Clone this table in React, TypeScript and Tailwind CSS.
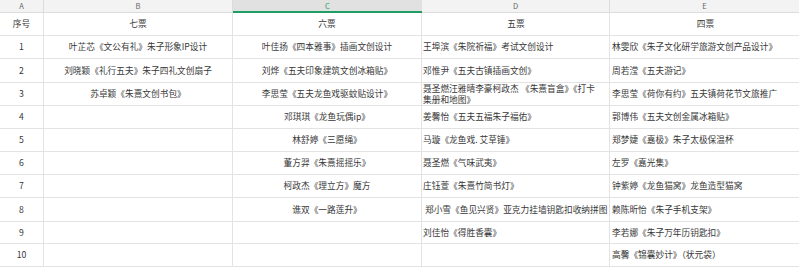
import React from "react";

const rows: [string, string, string, string, string][] = [
  ["序号", "七票", "六票", "五票", "四票"],
  ["1", "叶芷芯《文公有礼》朱子形象IP设计", "叶佳扬《四本雅事》插画文创设计", "王埠滨《朱院祈福》考试文创设计", "林雯欣《朱子文化研学旅游文创产品设计》"],
  ["2", "刘晓颖《礼行五夫》朱子四礼文创扇子", "刘烨《五夫印象建筑文创冰箱贴》", "邓惟尹《五夫古镇插画文创》", "周若滢《五夫游记》"],
  ["3", "苏卓颖《朱熹文创书包》", "李思莹《五夫龙鱼戏驱蚊贴设计》", "", "李思莹《荷你有约》五夫镇荷花节文旅推广"],
  ["4", "", "邓琪琪《龙鱼玩偶ip》", "姜馨怡《五夫五福朱子福佑》", "郭博伟《五夫文创金属冰箱贴》"],
  ["5", "", "林舒婷《三愿绳》", "马璇《龙鱼戏. 艾草锤》", "郑梦婕《嘉极》朱子太极保温杯"],
  ["6", "", "董方羿《朱熹摇摇乐》", "聂圣燃《气味武夷》", "左罗《嘉光集》"],
  ["7", "", "柯政杰《理立方》魔方", "庄钰萱《朱熹竹简书灯》", "钟紫婷《龙鱼猫窝》龙鱼造型猫窝"],
  ["8", "", "谯双《一路莲升》", "\u00a0郑小雪《鱼见兴贤》亚克力挂墙钥匙扣收纳拼图", "赖陈昕怡《朱子手机支架》"],
  ["9", "", "", "刘佳怡《得胜香囊》", "李若娜《朱子万年历钥匙扣》"],
  ["10", "", "", "", "高馨《锦囊妙计》（状元袋）"],
];

const heights = ["h-[23px]", "h-[23px]", "h-[24px]", "h-[23px]", "h-[23px]", "h-[23px]", "h-[23px]", "h-[23px]", "h-[24px]", "h-[22px]", "h-[23px]"];

export default function App() {
  return (
    <div
      className="w-[799px] h-[269px] overflow-hidden bg-white text-[#383838] text-[8.7px] leading-[10px]"
      style={{ fontFamily: '"Noto Sans CJK SC", "Noto Sans", sans-serif' }}
    >
      <div className="grid grid-cols-[44px_189px_189px_188px_1fr]">
        {/* column header bar */}
        <div className="h-[13px] bg-[#f3f3f3] border-r border-b border-[#dcdcdc] flex items-center justify-center text-[7.5px] text-[#666]">A</div>
        <div className="h-[13px] bg-[#f3f3f3] border-r border-b border-[#dcdcdc] flex items-center justify-center text-[7.5px] text-[#666]">B</div>
        <div className="h-[13px] bg-[#e1e1e1] border-b-2 border-[#1e9e63] flex items-center justify-center text-[7.5px] text-[#1e9e63]">C</div>
        <div className="h-[13px] bg-[#f3f3f3] border-r border-b border-[#dcdcdc] flex items-center justify-center text-[7.5px] text-[#666]">D</div>
        <div className="h-[13px] bg-[#f3f3f3] border-b border-[#dcdcdc] flex items-center justify-center text-[7.5px] text-[#666]">E</div>

        {rows.map((r, i) => (
          <React.Fragment key={i}>
            <div className={`${heights[i]} border-r border-b border-[#e3e3e3] flex items-center justify-center whitespace-nowrap`}>{r[0]}</div>
            <div className={`${heights[i]} border-r border-b border-[#e3e3e3] flex items-center justify-center whitespace-nowrap`}>{r[1]}</div>
            <div className={`${heights[i]} border-r border-b border-[#e3e3e3] flex items-center justify-center whitespace-nowrap`}>{r[2]}</div>
            <div className={`${heights[i]} border-r border-b border-[#e3e3e3] flex items-center pl-[1px] whitespace-nowrap ${i === 0 ? "justify-center" : ""}`}>
              {i === 3 ? (
                <div
                  className="flex flex-col leading-[11px] pt-[1px]"
                  style={{ fontFamily: '"Liberation Sans", "Noto Sans CJK SC", sans-serif' }}
                >
                  <span>聂圣燃汪雅晴李豪柯政杰 《朱熹盲盒》《打卡</span>
                  <span>集册和地图》</span>
                </div>
              ) : (
                r[3]
              )}
            </div>
            <div className={`${heights[i]} border-b border-[#e3e3e3] flex items-center pl-[2px] whitespace-nowrap ${i === 0 ? "justify-center" : ""}`}>{r[4]}</div>
          </React.Fragment>
        ))}
      </div>
    </div>
  );
}
